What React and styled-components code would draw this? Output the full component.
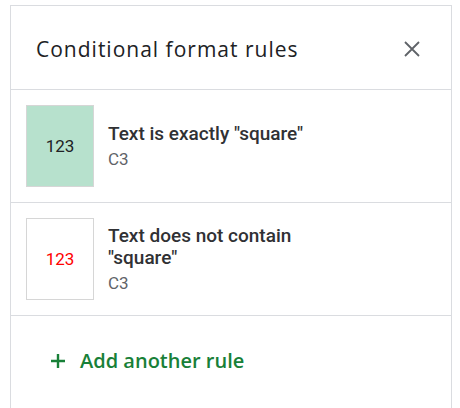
import styled, { createGlobalStyle } from 'styled-components'

const Global = createGlobalStyle`
  html, body {
    margin: 0;
    background: #fff;
  }
`

const Panel = styled.div`
  margin: 5px 0 0 10px;
  width: 440px;
  height: 403px;
  border: 1px solid #dadce0;
  border-bottom: none;
  background: #fff;
  font-family: Roboto, 'Liberation Sans', sans-serif;
`

const Header = styled.div`
  display: flex;
  align-items: center;
  justify-content: space-between;
  height: 84px;
  padding: 2px 31px 0 25px;
  box-sizing: border-box;
  border-bottom: 1px solid #dadce0;
`

const Title = styled.h1`
  margin: 0;
  font-family: 'Open Sans', sans-serif;
  font-size: 21px;
  font-weight: 500;
  color: #202124;
  letter-spacing: 1px;
`

const CloseButton = styled.button`
  display: flex;
  border: none;
  background: none;
  padding: 0;
  color: #5f6368;
  cursor: pointer;
`

const Rule = styled.div`
  display: flex;
  align-items: center;
  gap: 14px;
  height: 112px;
  padding-left: 15px;
  border-bottom: 1px solid #dadce0;
`

const Swatch = styled.div`
  display: flex;
  align-items: center;
  justify-content: center;
  flex-shrink: 0;
  width: 66px;
  height: 80px;
  border: 1px solid #d6d6d6;
  background: ${(p) => p.fill || '#fff'};
  color: ${(p) => p.ink || '#202124'};
  font-size: 17px;
`

const RuleText = styled.div`
  display: flex;
  flex-direction: column;
  width: 225px;
`

const RuleName = styled.div`
  font-size: 19px;
  font-weight: 500;
  line-height: 22px;
  color: #303134;
`

const Range = styled.div`
  margin-top: 4px;
  font-size: 17px;
  line-height: 20px;
  color: #5f6368;
`

const AddRule = styled.button`
  display: flex;
  align-items: center;
  gap: 15px;
  margin: 31px 0 0 40px;
  padding: 0;
  border: none;
  background: none;
  color: #188038;
  font-family: 'Open Sans', sans-serif;
  font-size: 20px;
  font-weight: 600;
  cursor: pointer;
`

const rules = [
  { name: 'Text is exactly "square"', range: 'C3', fill: '#b7e1cd', ink: '#202124' },
  { name: 'Text does not contain "square"', range: 'C3', fill: '#fff', ink: '#ff0000' },
]

export default function App() {
  return (
    <>
      <Global />
      <Panel>
        <Header>
          <Title>Conditional format rules</Title>
          <CloseButton aria-label="Close">
            <svg width="16" height="16" viewBox="0 0 16 16">
              <path d="M1 1L15 15M15 1L1 15" stroke="currentColor" strokeWidth="1.8" />
            </svg>
          </CloseButton>
        </Header>
        {rules.map((r) => (
          <Rule key={r.name}>
            <Swatch fill={r.fill} ink={r.ink}>123</Swatch>
            <RuleText>
              <RuleName>{r.name}</RuleName>
              <Range>{r.range}</Range>
            </RuleText>
          </Rule>
        ))}
        <AddRule>
          <svg width="14" height="14" viewBox="0 0 14 14">
            <path d="M7 0V14M0 7H14" stroke="currentColor" strokeWidth="2.4" />
          </svg>
          Add another rule
        </AddRule>
      </Panel>
    </>
  )
}
